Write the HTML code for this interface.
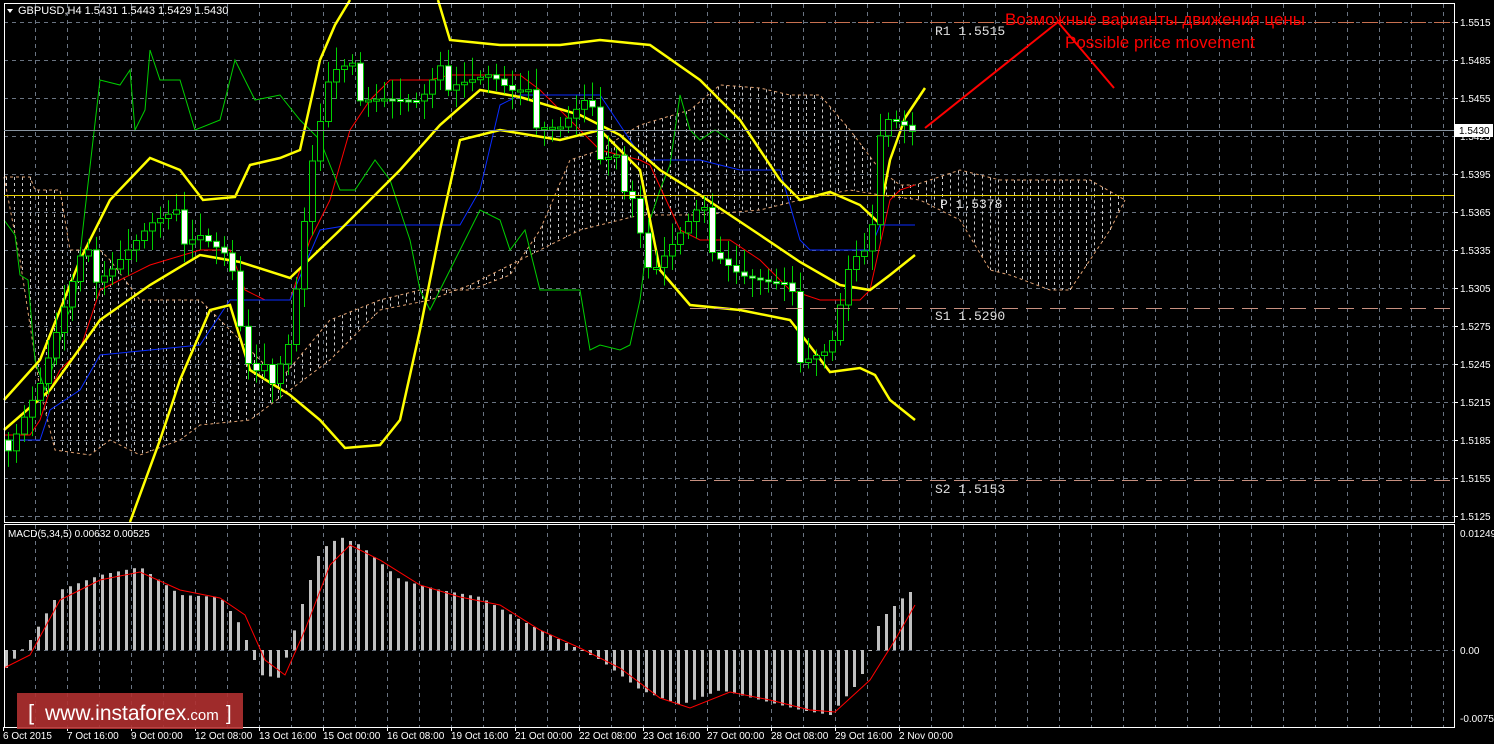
<!DOCTYPE html>
<html><head><meta charset="utf-8"><style>
html,body{margin:0;padding:0;background:#000;width:1494px;height:744px;overflow:hidden}
svg{display:block}
text{font-family:"Liberation Sans",sans-serif}
</style></head><body>
<svg id="s" width="1494" height="744" xmlns="http://www.w3.org/2000/svg">
<rect width="1494" height="744" fill="#000"/>
<g id="grid"></g>
<g id="cloud"></g>
<g id="lines"></g>
<g id="candles"></g>
<g id="macd"></g>
<rect x="4.5" y="3.5" width="1450" height="519" fill="none" stroke="#fff"/>
<rect x="4.5" y="524.5" width="1450" height="203" fill="none" stroke="#fff"/>
<line x1="690" y1="22.5" x2="1454" y2="22.5" stroke="#c87050" stroke-dasharray="16,8"/>
<line x1="4" y1="195.5" x2="1454" y2="195.5" stroke="#e8d000"/>
<line x1="690" y1="308.5" x2="1454" y2="308.5" stroke="#c89080" stroke-dasharray="16,8"/>
<line x1="690" y1="480.5" x2="1454" y2="480.5" stroke="#c89080" stroke-dasharray="16,8"/>
<line x1="4" y1="130.5" x2="1454" y2="130.5" stroke="#8894a0"/>
<g font-size="13" fill="#e0e0e0">
<text x="935" y="35" style="font-family:'Liberation Mono',monospace">R1 1.5515</text>
<text x="940" y="208" style="font-family:'Liberation Mono',monospace">P 1.5378</text>
<text x="935" y="320" style="font-family:'Liberation Mono',monospace">S1 1.5290</text>
<text x="935" y="493" style="font-family:'Liberation Mono',monospace">S2 1.5153</text>
</g>
<line x1="925" y1="128" x2="1058" y2="22" stroke="#f00" stroke-width="2"/>
<line x1="1058" y1="22" x2="1114" y2="88" stroke="#f00" stroke-width="2"/>
<text x="1005" y="25" fill="#f00" font-size="17">Возможные варианты движения цены</text>
<text x="1065" y="48" fill="#f00" font-size="17">Possible price movement</text>
<path d="M7 9 L13 9 L10 13 Z" fill="#fff"/>
<text x="18" y="14" fill="#fff" font-size="11">GBPUSD,H4  1.5431 1.5443 1.5429 1.5430</text>
<text x="8" y="537" fill="#fff" font-size="10">MACD(5,34,5) 0.00632 0.00525</text>
<g id="axis" font-size="10" fill="#fff"></g>
<rect x="1455" y="124" width="38" height="13" fill="#fff"/>
<text x="1459" y="134" fill="#000" font-size="10">1.5430</text>
<rect x="17" y="693" width="226" height="36" fill="#b03030" opacity="0.9"/>
<text x="28" y="720" fill="#fff" font-size="22">[</text>
<text x="45" y="720" fill="#fff" font-size="21">www.instaforex<tspan font-size="15">.com</tspan></text>
<text x="226" y="720" fill="#fff" font-size="20">]</text>
</svg>
<script>
const NS="http://www.w3.org/2000/svg";
function el(p,t,a){const e=document.createElementNS(NS,t);for(const k in a)e.setAttribute(k,a[k]);document.getElementById(p).appendChild(e);return e;}
for(let x=35;x<1454;x+=32){el("grid","line",{x1:x+.5,y1:4,x2:x+.5,y2:522,stroke:"#6a7482","stroke-dasharray":"4,4"});el("grid","line",{x1:x+.5,y1:525,x2:x+.5,y2:727,stroke:"#6a7482","stroke-dasharray":"4,4"});}
for(let y=22;y<520;y+=38){el("grid","line",{x1:4,y1:y+.5,x2:1454,y2:y+.5,stroke:"#6a7482","stroke-dasharray":"4,4"});}
el("grid","line",{x1:4,y1:650.5,x2:1454,y2:650.5,stroke:"#6a7482","stroke-dasharray":"4,4"});
let p=1.5515;
for(let y=22;y<520;y+=38){el("axis","line",{x1:1454,y1:y+.5,x2:1458,y2:y+.5,stroke:"#fff"});const t=el("axis","text",{x:1460,y:y+4});t.textContent=p.toFixed(4);p-=0.003;}
[[533,"0.01249"],[650,"0.00"],[718,"-0.0075"]].forEach(a=>{const t=el("axis","text",{x:1460,y:a[0]+4});t.textContent=a[1];});
const tl=["6 Oct 2015","7 Oct 16:00","9 Oct 00:00","12 Oct 08:00","13 Oct 16:00","15 Oct 00:00","16 Oct 08:00","19 Oct 16:00","21 Oct 00:00","22 Oct 08:00","23 Oct 16:00","27 Oct 00:00","28 Oct 08:00","29 Oct 16:00","2 Nov 00:00"];
tl.forEach((s,i)=>{const x=3+64*i;el("axis","line",{x1:x+.5,y1:727,x2:x+.5,y2:731,stroke:"#fff"});const t=el("axis","text",{x:x,y:739});t.textContent=s;});
function interp(pts,x){for(let i=0;i<pts.length-1;i++){if(x>=pts[i][0]&&x<=pts[i+1][0]){const f=(x-pts[i][0])/(pts[i+1][0]-pts[i][0]);return pts[i][1]+f*(pts[i+1][1]-pts[i][1]);}}return pts[pts.length-1][1];}
function pl(pts,c,w,dash){const a={points:pts.map(p=>p.join(",")).join(" "),fill:"none",stroke:c,"stroke-width":w};if(dash)a["stroke-dasharray"]=dash;el("lines","polyline",a);}
const cA=[[4,177],[30,177],[35,190],[60,190],[70,250],[100,250],[110,260],[140,300],[200,300],[230,330],[250,350],[280,380],[330,320],[380,300],[420,290],[470,290],[510,275],[540,230],[570,160],[600,150],[640,125],[690,110],[720,85],[760,88],[790,95],[820,95],[850,130],[880,170],[900,185],[915,185],[960,170],[1000,180],[1040,180],[1090,180],[1125,200]];
const cB=[[4,177],[20,260],[40,390],[55,450],[90,455],[110,440],[140,455],[180,440],[200,425],[250,420],[290,390],[330,360],[380,310],[430,300],[470,285],[520,260],[580,230],[640,215],[700,215],[760,210],[800,200],[850,190],[880,195],[920,200],[960,220],[990,270],[1010,275],[1050,290],[1070,290],[1090,260],[1110,230],[1125,200]];
for(let x=6;x<1125;x+=8){const a=interp(cA,x),b=interp(cB,x);el("cloud","line",{x1:x+.5,y1:Math.min(a,b),x2:x+.5,y2:Math.max(a,b),stroke:"#c8c8c8","stroke-dasharray":"3,3","stroke-width":1});}
pl(cA,"#e0a070",1,"3,3");pl(cB,"#e0a070",1,"3,3");
pl([[4,435],[30,435],[40,420],[50,390],[60,370],[80,350],[100,290],[120,280],[150,265],[200,250],[230,250],[245,290],[265,300],[290,300],[310,240],[330,200],[350,130],[370,100],[390,80],[430,80],[450,75],[520,75],[540,90],[580,130],[600,150],[640,160],[650,165],[680,230],[700,240],[730,240],[760,260],[790,290],[820,300],[860,300],[870,290],[890,200],[900,190],[915,185]],"#f00",1);
pl([[4,440],[40,440],[50,410],[80,390],[100,355],[150,350],[200,345],[230,300],[240,300],[290,300],[320,230],[350,225],[400,225],[460,225],[480,190],[500,105],[520,95],[560,95],[600,95],[640,155],[650,160],[700,160],[740,170],[780,170],[800,240],[810,250],[840,250],[870,250],[880,225],[915,225]],"#0a2cff",1);
pl([[4,220],[15,235],[20,275],[28,280],[35,360],[45,390],[55,360],[65,320],[75,300],[85,210],[100,80],[120,85],[130,70],[135,130],[145,110],[150,50],[160,80],[180,80],[195,130],[220,120],[235,60],[255,100],[280,95],[300,120],[320,140],[340,190],[355,190],[375,160],[390,180],[410,240],[420,290],[430,310],[450,270],[460,250],[480,210],[500,220],[510,250],[525,230],[540,290],[560,290],[580,290],[590,350],[600,345],[620,350],[630,345],[640,300],[650,220],[660,190],[670,165],[680,95],[690,130],[700,140],[715,130],[730,140]],"#00d000",1);
const Y="#ffff00";
pl([[4,400],[40,360],[80,260],[110,200],[150,158],[180,170],[203,200],[235,197],[250,165],[280,158],[300,150],[320,60],[335,25],[350,0]],Y,2.5);
pl([[438,0],[450,40],[500,45],[560,45],[600,40],[650,45],[700,80],[740,120],[760,150],[780,180],[800,200],[830,192],[860,205],[878,222],[890,160],[905,118],[925,88]],Y,2.5);
pl([[4,430],[50,390],[100,320],[150,285],[200,255],[240,262],[290,278],[340,230],[400,170],[440,125],[480,90],[520,97],[580,115],[620,135],[660,170],[700,195],[760,235],[800,262],[840,285],[870,290],[890,275],[915,255]],Y,2.5);
pl([[130,522],[160,440],[180,380],[210,310],[230,305],[250,370],[290,395],[320,420],[345,448],[380,445],[400,420],[420,330],[440,230],[460,140],[500,130],[560,140],[600,130],[640,170],[660,270],[690,305],[740,310],[790,320],[830,372],[860,368],[875,375],[890,400],[915,420]],Y,2.5);
const cl=[[4,440],[40,380],[80,270],[110,260],[150,230],[200,225],[230,260],[245,370],[260,390],[290,330],[310,170],[330,80],[350,80],[380,90],[420,110],[450,70],[490,75],[510,100],[560,120],[590,100],[600,170],[630,175],[650,270],[680,240],[700,220],[740,270],[770,290],[790,300],[800,345],[830,345],[850,265],[870,260],[885,100],[900,110],[915,128]];
let prev=interp(cl,4);
for(let x=8;x<=915;x+=8){const c=interp(cl,x)+((x*37)%11-5)*3.5;const o=prev;const top=Math.min(o,c),bot=Math.max(o,c);const hi=top-6-((x*13)%17),lo=bot+5+((x*7)%15);
el("candles","line",{x1:x+.5,y1:hi,x2:x+.5,y2:lo,stroke:"#00d000"});
el("candles","rect",{x:x-2.5,y:top,width:6,height:Math.max(bot-top,2),fill:c>o?"#fff":"#000",stroke:"#00d000"});prev=c;}
const mb=[[6,668],[30,640],[60,590],[100,575],[140,567],[180,595],[220,597],[240,625],[260,675],[280,678],[300,610],[320,550],[340,537],[360,545],[400,580],[440,590],[480,597],[520,620],[560,640],[580,650],[600,660],[640,690],[680,705],[720,690],[760,700],[800,710],[830,715],[860,680],[880,620],[900,600],[915,588]];
for(let x=6;x<=915;x+=8){const y=interp(mb,x);el("macd","rect",{x:x-1,y:Math.min(y,650),width:3,height:Math.max(Math.abs(y-650),1),fill:"#c0c0c0"});}
const sg=[[4,668],[30,655],[60,600],[100,580],[140,572],[180,590],[220,598],[245,615],[265,660],[285,675],[305,630],[330,565],[350,545],[380,560],[420,585],[460,597],[500,605],[540,630],[580,648],[620,668],[660,698],[690,708],[730,692],[770,700],[810,710],[835,712],[870,680],[895,640],[915,605]];
el("macd","polyline",{points:sg.map(p=>p.join(",")).join(" "),fill:"none",stroke:"#f00","stroke-width":1});
</script>
</body></html>
